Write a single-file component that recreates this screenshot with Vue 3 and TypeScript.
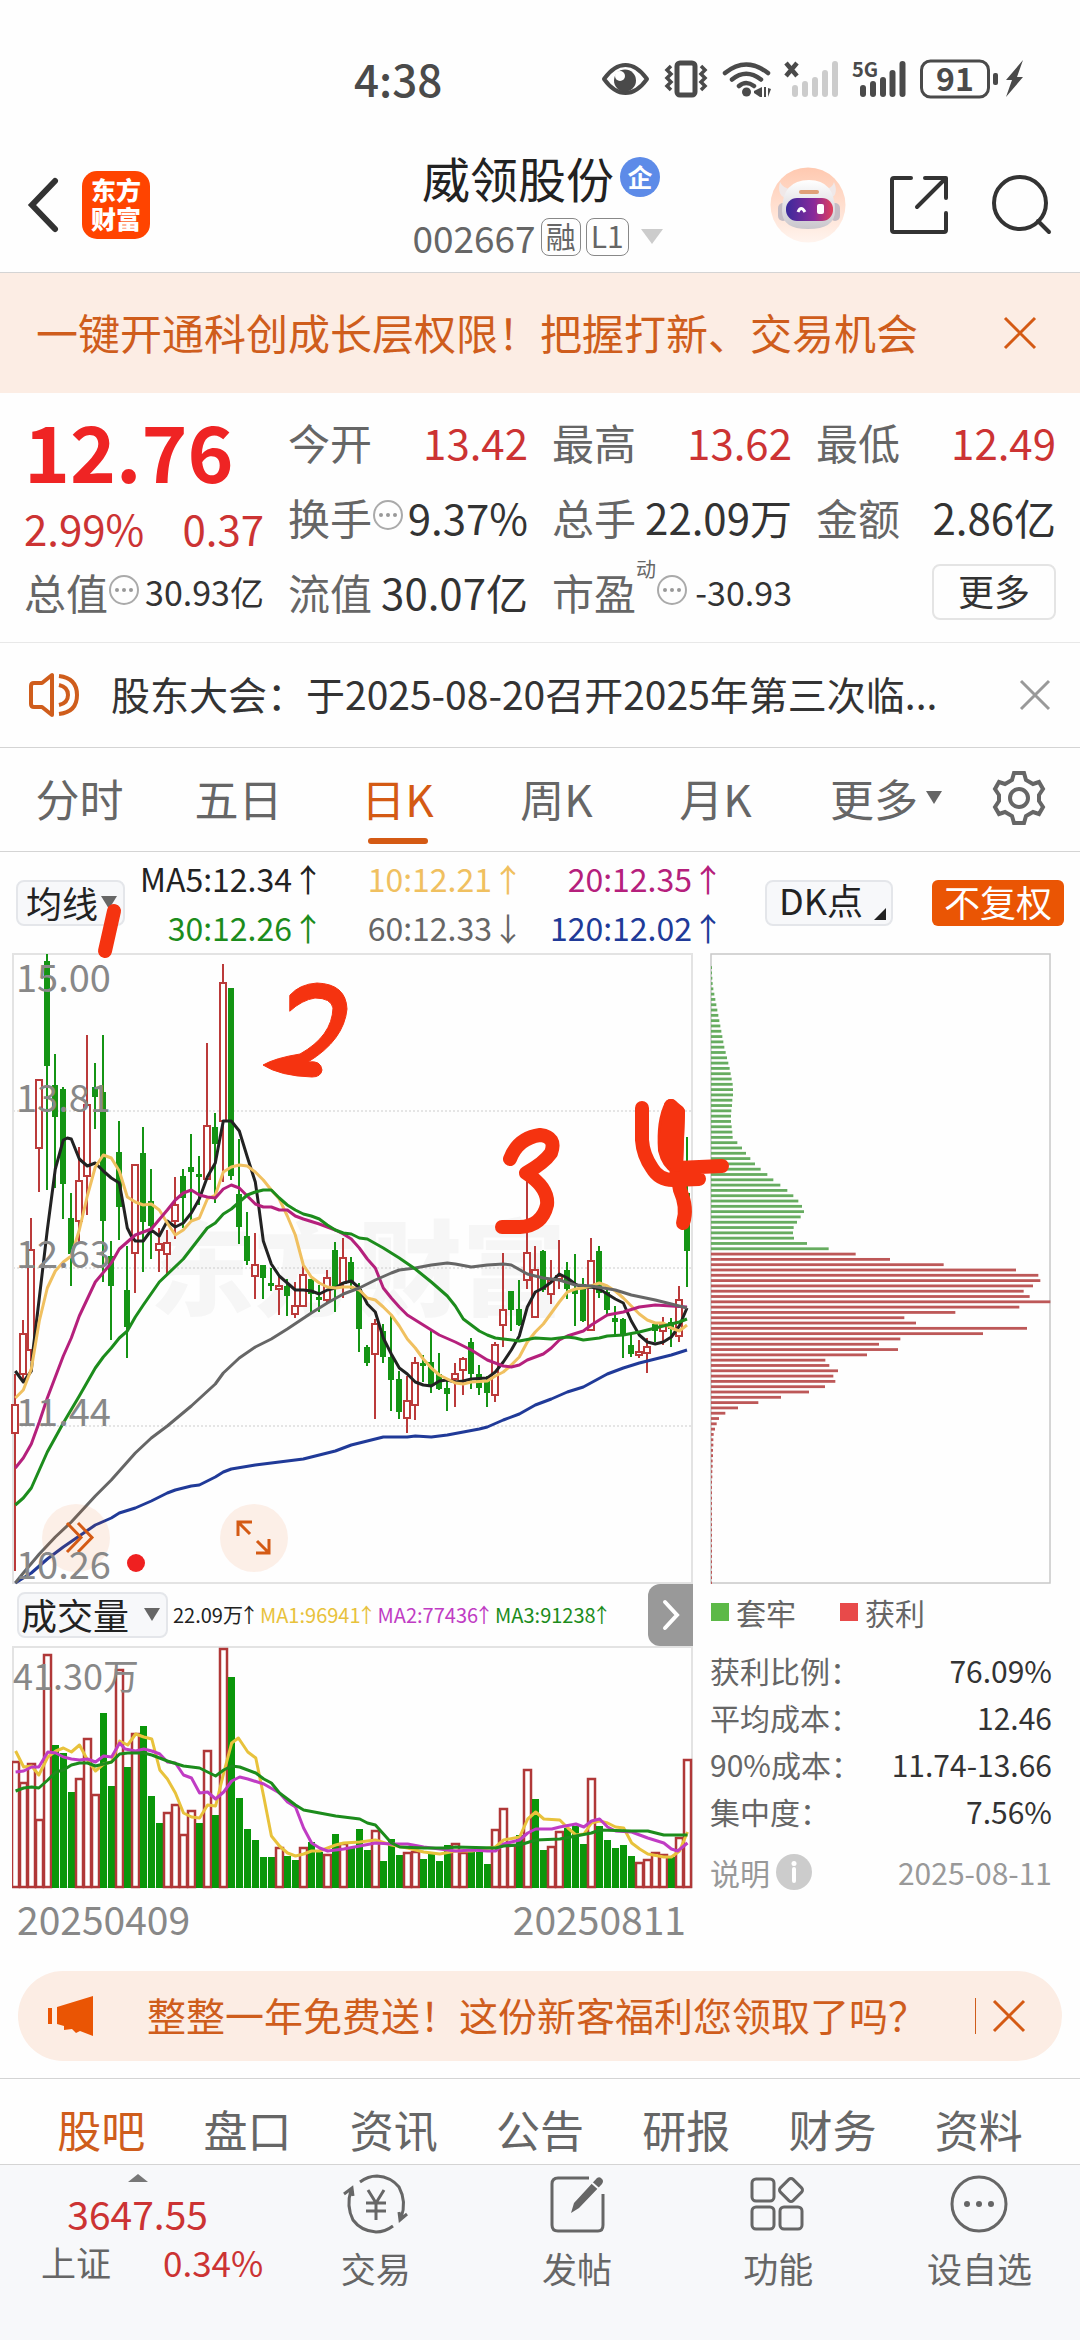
<script setup lang="ts">
import { ref } from 'vue'

type Candle = { x: number; up: boolean; high: number; top: number; bottom: number; low: number }

const STEP = 8
const FIRST_X = 15

const periods = ['分时', '五日', '日K', '周K', '月K']
const activePeriod = ref('日K')
const sections = ['股吧', '盘口', '资讯', '公告', '研报', '财务', '资料']
const activeSection = ref('股吧')

const averages = [
  { text: 'MA5:12.34', arrow: '↑', tone: 'ma5' },
  { text: '10:12.21', arrow: '↑', tone: 'ma10' },
  { text: '20:12.35', arrow: '↑', tone: 'ma20' },
  { text: '30:12.26', arrow: '↑', tone: 'ma30' },
  { text: '60:12.33', arrow: '↓', tone: 'ma60' },
  { text: '120:12.02', arrow: '↑', tone: 'ma120' },
]

const volumeAverages = [
  { text: '22.09万', tone: 'ma5' },
  { text: 'MA1:96941', tone: 'vol1' },
  { text: 'MA2:77436', tone: 'vol2' },
  { text: 'MA3:91238', tone: 'ma30' },
]

const costs = [
  { label: '获利比例：', value: '76.09%' },
  { label: '平均成本：', value: '12.46' },
  { label: '90%成本：', value: '11.74-13.66' },
  { label: '集中度：', value: '7.56%' },
]

const priceY = (v: number) => Math.round(940 + v / 2.376)
const volumeY = (v: number) => Math.round(1580 + v / 3)

// One entry per trading day: direction, high, body top, body bottom, low.
const candleData = `r 1030 1105 1172 1500;r 903 935 1032 1045;r 660 736 975 1000;r 330 332 494 598;g 33 50 300 594;
g 270 345 420 590;g 349 355 580 664;g 601 660 745 822;r 492 572 668 720;r 226 392 560 653;g 292 350 373 448;
g 226 362 667 812;g 715 750 823 950;g 431 504 635 713;g 728 832 920 994;r 534 534 743 838;g 444 507 670 790;
g 545 619 680 758;r 685 722 737 790;r 690 719 745 795;r 563 630 668 710;g 545 561 613 684;g 460 539 552 665;
g 513 556 562 630;r 245 443 567 567;g 412 444 484 625;r 56 102 429 575;g 115 115 560 570;g 473 603 682 723;
g 646 703 762 772;r 697 773 798 853;g 773 773 802 852;g 780 814 821 835;r 797 822 829 890;g 805 822 847 893;
r 813 869 888 898;r 765 796 869 872;g 806 806 840 887;g 820 848 852 885;r 783 803 855 862;g 717 737 830 885;
r 709 755 815 850;g 753 764 810 830;g 815 830 925 978;g 963 968 1005 1013;r 900 913 983 1137;g 912 930 990 1006;
g 890 990 1045 1120;g 1025 1043 1122 1137;r 1035 1096 1135 1172;r 990 1006 1106 1140;g 985 1005 1010 1050;
g 927 1003 1060 1077;g 981 1030 1068 1070;g 1040 1065 1078 1120;r 1004 1032 1042 1110;r 990 996 1022 1082;
g 946 956 1030 1066;g 1010 1030 1064 1080;g 1035 1046 1077 1110;r 954 962 1080 1098;r 744 878 914 966;
g 833 833 878 930;g 808 877 914 916;r 570 743 807 830;r 728 784 896 898;g 736 738 832 836;r 760 808 841 865;
r 712 798 804 830;g 766 785 830 852;g 746 830 842 916;g 804 818 906 908;r 709 762 927 929;g 728 738 838 850;
g 832 836 878 890;g 870 898 908 938;g 898 900 942 992;g 936 962 983 991;r 950 978 980 993;r 946 968 982 1028;
g 910 912 928 955;r 896 915 930 963;g 898 908 925 966;r 823 856 940 955;g 468 600 738 825`

const candles: Candle[] = candleData.split(';').map((row, i) => {
  const [dir, ...v] = row.trim().split(' ')
  const [high, top, bottom, low] = v.map((n) => priceY(Number(n)))
  return { x: FIRST_X + i * STEP, up: dir === 'r', high, top, bottom: Math.max(bottom, top + 3), low }
})

function points(data: string, x0: number, scale: number, toY: (v: number) => number): string {
  return data
    .trim()
    .split(/\s+/)
    .map((p) => {
      const [x, y] = p.split(',').map(Number)
      return `${Math.round((x0 + x / scale) * 10) / 10},${toY(y)}`
    })
    .join(' ')
}

const priceLine = (early: string, late: string) =>
  points(early, 0, 3, priceY) + ' ' + points(late, 340, 3, priceY)

const priceLines = [
  {
    tone: 'ma120',
    d: priceLine(
      '46,1528 94,1503 142,1470 190,1442 238,1416 286,1390 334,1373 358,1362 406,1350 454,1332 502,1315 526,1307 574,1298 598,1294 646,1277 670,1265 694,1258 766,1247 838,1240 910,1232 982,1220 1006,1213',
      '34,1199 82,1190 130,1181 202,1182 226,1179 274,1180 322,1175 370,1170 418,1163 442,1157 490,1141 538,1126 586,1106 634,1090 682,1075 730,1062 802,1032 850,1018 898,1006 946,996 994,986 1041,974',
    ),
  },
  {
    tone: 'ma5',
    d: priceLine(
      '46,1025 70,1050 94,1025 100,970 118,850 142,690 166,545 190,476 202,471 214,472 238,520 262,536 286,530 310,548 334,566 358,578 370,630 382,684 394,703 406,716 430,716 454,690 478,703 502,668 526,683 550,672 574,648 598,615 622,563 646,531 660,470 670,430 694,431 718,454 742,516 766,575 775,625 790,716 814,770 838,799 862,814 886,832 910,831 934,835 958,841 982,832 1006,826',
      '10,814 34,811 58,828 82,864 106,884 130,945 154,983 178,1016 202,1032 226,1050 250,1057 274,1060 298,1049 322,1046 346,1050 370,1047 394,1043 442,1040 466,1027 490,1003 514,973 538,940 562,873 586,837 610,828 634,813 658,793 682,804 706,818 730,826 754,825 778,829 802,840 826,853 850,863 874,906 898,938 922,956 946,960 970,956 994,944 1018,916 1041,874',
    ),
  },
  {
    tone: 'ma10',
    d: priceLine(
      '46,1088 70,1070 94,1020 118,905 142,828 166,786 190,764 214,750 238,690 262,608 286,540 310,511 334,519 358,548 382,610 406,623 430,630 454,627 478,642 502,673 526,700 550,690 574,667 598,660 622,615 646,605 670,552 694,540 718,535 742,538 766,551 790,570 814,593 838,615 862,655 886,702 910,772 934,800 958,816 982,824 1006,828',
      '10,825 34,824 58,832 82,850 106,856 130,872 154,892 178,916 202,947 226,970 250,995 274,1018 298,1033 322,1044 346,1053 370,1054 394,1050 442,1047 466,1037 490,1026 514,1010 538,990 562,955 586,932 610,912 634,886 658,860 682,837 706,829 730,826 754,822 778,814 802,822 826,834 850,850 874,870 898,888 922,904 946,910 970,911 994,922 1018,929 1041,915',
    ),
  },
  {
    tone: 'ma20',
    d: priceLine(
      '46,1255 70,1230 94,1197 118,1145 142,1088 190,988 214,945 238,893 286,813 334,768 358,735 382,718 406,702 454,687 502,642 526,617 550,601 574,594 598,606 622,611 646,613 670,592 694,583 718,590 742,608 766,627 790,635 814,634 838,641 862,641 886,656 910,662 958,675 1006,688',
      '10,698 34,710 58,731 82,757 106,780 130,826 154,850 178,872 202,890 250,914 298,938 346,956 394,975 442,997 466,1005 490,1011 514,1014 538,1010 562,999 610,983 634,969 658,951 682,940 730,929 754,914 778,902 802,890 850,883 898,873 946,868 994,870 1041,872',
    ),
  },
  {
    tone: 'ma60',
    d: priceLine(
      '46,1527 70,1505 118,1460 166,1418 214,1382 286,1320 334,1283 406,1218 454,1184 502,1155 574,1107 646,1055 670,1028 718,992 766,968 814,948 862,925 934,887 982,863',
      '10,840 58,826 106,808 154,792 178,785 226,780 274,773 322,768 346,770 394,777 442,772 490,770 514,773 562,793 610,802 658,807 706,820 754,822 826,832 874,843 946,855 994,866 1041,874',
    ),
  },
  {
    tone: 'ma30',
    d: priceLine(
      '46,1342 70,1326 94,1302 142,1216 190,1148 238,1083 262,1050 286,1016 310,990 334,970 358,945 382,928 406,895 430,867 478,812 550,757 622,685 646,672 670,650 694,638 718,622 742,607 766,598 790,593 814,595 838,613 862,630 886,642 910,652 934,656 958,664 982,676 1006,690',
      '10,697 34,698 58,707 82,711 130,732 178,756 226,782 274,812 322,847 346,870 370,900 394,914 418,928 442,939 466,945 490,948 538,952 586,946 634,947 682,944 706,946 730,950 778,945 802,940 850,939 898,932 946,922 994,912 1018,908 1041,900',
    ),
  },
]

const volumeData =
  'r542 r605 r549 r716 r222 g494 g519 g636 r594 r474 r641 g398 g618 r266 g560 r458 g438 g648 g729 r697 r671 r763 r690 g729 r510 g705 r203 g290 g653 g746 g779 g830 g832 r801 g828 g839 r801 g787 g815 r821 g761 r789 g805 g748 g810 r751 g843 g778 g825 r815 r813 g838 g820 g842 g795 r790 r815 g815 g815 g851 r746 r685 r792 g764 r568 g657 g810 r797 r754 g745 g737 g793 r594 g738 g780 g805 g796 g829 r845 r836 r815 r821 g830 r770 r536'

const volumes = volumeData.split(' ').map((v, i) => ({
  x: FIRST_X + i * STEP,
  up: v[0] === 'r',
  top: volumeY(Number(v.slice(1))),
}))

const volumeLine = (data: string) => points(data, 0, 2.24, volumeY)
const volumeLines = [
  {
    tone: 'vol1',
    d: volumeLine(
      '35,513 53,562 71,558 87,585 107,530 125,514 142,503 160,516 178,494 196,540 214,572 232,553 250,545 268,483 286,495 304,461 322,470 340,478 358,570 375,596 393,638 411,700 429,711 447,713 465,676 483,678 501,580 519,488 534,473 555,515 573,535 591,650 608,768 626,798 644,818 662,827 680,822 698,812 716,812 734,805 752,795 770,790 806,785 841,780 877,795 913,805 949,815 985,822 1021,812 1057,812 1110,802 1128,780 1164,770 1182,718 1200,695 1218,717 1254,719 1272,745 1290,764 1308,762 1325,730 1343,722 1361,730 1379,742 1397,745 1415,790 1433,808 1451,822 1487,830 1504,832 1522,812 1540,757',
    ),
  },
  {
    tone: 'vol2',
    d: volumeLine(
      '35,575 53,572 71,560 87,562 107,515 125,518 142,530 160,537 178,540 196,538 214,547 232,528 250,532 268,488 280,508 304,512 322,508 340,512 358,523 375,545 393,550 411,586 429,594 447,638 465,636 483,657 501,635 519,602 537,592 555,597 591,612 626,638 644,665 662,682 680,745 698,790 716,805 734,812 770,806 806,798 841,790 877,793 913,793 949,800 985,806 1021,814 1057,810 1092,814 1110,812 1128,792 1164,780 1182,760 1200,748 1236,748 1254,742 1290,732 1308,740 1325,722 1343,718 1361,740 1379,752 1415,755 1433,765 1451,775 1487,788 1504,808 1518,812 1540,790',
    ),
  },
  {
    tone: 'ma30',
    d: volumeLine(
      '35,634 53,625 71,622 87,624 107,600 125,576 142,570 160,555 178,550 196,550 214,558 232,552 250,545 268,523 286,518 322,518 340,524 375,542 411,558 447,565 465,577 483,587 501,570 519,558 537,560 573,578 591,598 608,610 626,638 662,675 680,690 716,698 752,708 806,718 823,730 841,735 859,762 877,790 895,800 949,804 1003,804 1021,801 1110,804 1128,798 1164,796 1200,780 1254,778 1290,768 1325,758 1343,750 1415,753 1451,753 1487,764 1522,766 1540,764',
    ),
  },
]

// Share of holders at each price level, from the top of the range down.
const trapped = [
  2, 2, 4, 5, 7, 10, 13, 16, 19, 22, 25, 28, 31, 34, 37, 40, 44, 48, 52, 56, 59, 62, 65, 66, 66, 64, 63, 61, 60, 60, 62,
  64, 65, 79, 93, 105, 118, 132, 149, 169, 187, 208, 229, 247, 262, 273, 279, 269, 258, 248, 246, 249, 288, 353,
]
const profitable = [
  434, 537, 698, 915, 982, 988, 966, 938, 956, 1018, 925, 733, 580, 615, 948, 816, 568, 504, 561, 468, 343, 355, 381,
  367, 373, 342, 294, 210, 142, 81, 43, 24, 17, 12, 8, 7, 7, 6, 6, 5, 5, 4, 4, 3, 3, 3, 3, 3, 3, 3, 3, 3, 3, 3, 3, 3, 3,
  3, 3, 3, 3, 3, 3,
]
const chips = [...trapped, ...profitable].map((w, i) => ({
  y: 967.4 + i * 5.305,
  w: Math.max(w / 3, 1),
  win: i >= trapped.length,
}))

const priceLabels = [
  { y: 992, text: '15.00' },
  { y: 1112, text: '13.81' },
  { y: 1268, text: '12.63' },
  { y: 1426, text: '11.44' },
  { y: 1579, text: '10.26' },
]
</script>

<template>
  <main class="app">
    <div class="status">
      <time class="clock">4:38</time>
      <svg class="status-icons" viewBox="600 55 426 50" aria-hidden="true">
        <g fill="none" stroke="#4a4a4a" stroke-width="4">
          <path d="M604 79 Q614 65 625.500 65 Q637 65 647 79 Q637 93 625.500 93 Q614 93 604 79Z" stroke-linejoin="round" />
          <rect x="677" y="63" width="18" height="32" rx="3" stroke-width="5" />
          <path d="M671 67 l-4 4 4 4 -4 4 4 4 -4 4 4 4M701 67 l4 4 -4 4 4 4 -4 4 4 4 -4 4" transform="translate(0 -1)" stroke-width="3.500" />
          <path d="M725 73 Q746 56 768 73M732 79.500 Q746 68 761 79.500M739 86 Q746 80 754 86" stroke-width="4.500" stroke-linecap="round" />
          <path d="M786 63 l11 13M797 63 l-11 13" stroke-width="4.500" />
          <rect x="921.500" y="61" width="67" height="36" rx="9" stroke-width="3" />
        </g>
        <g fill="#4a4a4a">
          <circle cx="625" cy="80.500" r="11" />
          <circle cx="620" cy="76" r="5" fill="#fff" />
          <circle cx="746.500" cy="92" r="4.500" />
          <path d="M762 87v10h-2l-6-4v-2zM764 87v10h2v-10zM768 88l3 1-3 8z" />
          <rect x="860" y="85" width="6" height="12" rx="3" />
          <rect x="870" y="81" width="6" height="16" rx="3" />
          <rect x="880" y="77" width="6" height="20" rx="3" />
          <rect x="889.500" y="70" width="6" height="27" rx="3" />
          <rect x="899.500" y="61" width="6" height="36" rx="3" />
          <rect x="993" y="73" width="5" height="12" rx="2" />
          <path d="M1023 60 1006 80h6l-6 17 17-20h-6z" />
        </g>
        <g fill="#ccc">
          <rect x="792" y="85" width="6" height="12" rx="3" />
          <rect x="802" y="81" width="6" height="16" rx="3" />
          <rect x="812" y="77" width="6" height="20" rx="3" />
          <rect x="822" y="70" width="6" height="27" rx="3" />
          <rect x="832" y="61" width="6" height="36" rx="3" />
        </g>
        <text class="net" x="852" y="77">5G</text>
        <text class="battery" x="955" y="91" text-anchor="middle">91</text>
      </svg>
    </div>

    <header class="head">
      <div class="head-left">
        <button class="icon-btn" aria-label="返回">
          <svg width="38" height="60" viewBox="0 0 38 60"><path d="M31 6 8 30 31 54" fill="none" stroke="#333" stroke-width="6" stroke-linecap="round" /></svg>
        </button>
        <span class="logo">东方<br />财富</span>
      </div>
      <div class="title">
        <h1>威领股份<span class="badge">企</span></h1>
        <p class="code">002667<span class="tag">融</span><span class="tag">L1</span>
          <svg class="code-arrow" width="24" height="16" viewBox="0 0 24 16"><path d="M1 0h22L12 15z" fill="#ccc" /></svg>
        </p>
      </div>
      <div class="head-right">
        <button class="icon-btn" aria-label="智能助手">
          <svg width="76" height="76" viewBox="0 0 76 76">
            <defs>
              <linearGradient id="halo" x1="0" y1="0" x2="0" y2="1"><stop offset="0" stop-color="#ffc9b0" /><stop offset="1" stop-color="#fff4ee" /></linearGradient>
              <linearGradient id="visor" x1="0" y1="0" x2="1" y2="0"><stop offset="0" stop-color="#3a2a9c" /><stop offset=".6" stop-color="#8a2a9a" /><stop offset="1" stop-color="#e0405a" /></linearGradient>
              <linearGradient id="shell" x1="0" y1="0" x2="0" y2="1"><stop offset="0" stop-color="#fff" /><stop offset="1" stop-color="#c9c6cc" /></linearGradient>
            </defs>
            <circle cx="38" cy="38" r="37.500" fill="url(#halo)" />
            <path d="M10 15 Q6 30 19 32 L24 22 Q14 23 10 15ZM64 15 Q70 30 57 32 L52 22 Q62 23 64 15Z" fill="#f0e8e8" />
            <rect x="8" y="36" width="10" height="18" rx="5" fill="#c4bcc4" /><rect x="60" y="36" width="10" height="18" rx="5" fill="#c4bcc4" />
            <path d="M12 44 Q12 13 39 13 Q65 13 65 44 Q65 62 38 62 Q12 62 12 44Z" fill="url(#shell)" />
            <rect x="29" y="23" width="20" height="4" rx="2" fill="#e0a078" />
            <rect x="16" y="31" width="47" height="23" rx="11" fill="url(#visor)" />
            <path d="M28 45 Q31 38 35 45" fill="none" stroke="#fff" stroke-width="3" />
            <rect x="47" y="37" width="7" height="10" rx="2" fill="#fff" />
          </svg>
        </button>
        <button class="icon-btn" aria-label="分享">
          <svg width="60" height="60" viewBox="0 0 60 60" fill="none" stroke="#333" stroke-width="4" stroke-linecap="round" stroke-linejoin="round">
            <path d="M22 3H5Q3 3 3 5V55Q3 57 5 57H55Q57 57 57 55V38M36 3H57V23M56 4 28 32" />
          </svg>
        </button>
        <button class="icon-btn" aria-label="搜索">
          <svg width="60" height="60" viewBox="0 0 60 60" fill="none" stroke="#333" stroke-width="4" stroke-linecap="round">
            <circle cx="28" cy="28" r="26" /><path d="M46 46 57 57" />
          </svg>
        </button>
      </div>
    </header>

    <aside class="banner">
      <a href="#" class="banner-link">一键开通科创成长层权限！把握打新、交易机会</a>
      <button class="icon-btn" aria-label="关闭">
        <svg width="34" height="34" viewBox="0 0 34 34"><path d="M2 2 32 32M32 2 2 32" stroke="#d45a14" stroke-width="3" /></svg>
      </button>
    </aside>

    <section class="quote">
      <div class="price-cell">
        <strong class="price">12.76</strong>
        <div class="change"><span>2.99%</span><span>0.37</span></div>
      </div>
      <div class="cell"><span class="label">今开</span><span class="red">13.42</span></div>
      <div class="cell"><span class="label">最高</span><span class="red">13.62</span></div>
      <div class="cell"><span class="label">最低</span><span class="red">12.49</span></div>
      <div class="cell">
        <span class="label">换手<svg class="more-dot" viewBox="0 0 32 32"><use href="#dots" /></svg></span><span>9.37%</span>
      </div>
      <div class="cell"><span class="label">总手</span><span>22.09万</span></div>
      <div class="cell"><span class="label">金额</span><span>2.86亿</span></div>
      <div class="cell">
        <span class="label">总值<svg class="more-dot" viewBox="0 0 32 32"><use href="#dots" /></svg></span><span class="small">30.93亿</span>
      </div>
      <div class="cell"><span class="label">流值</span><span>30.07亿</span></div>
      <div class="cell">
        <span class="label">市盈<sup>动</sup><svg class="more-dot" viewBox="0 0 32 32"><g id="dots"><circle cx="16" cy="16" r="14" fill="none" stroke="#aaa" stroke-width="2" /><g fill="#999"><circle cx="9" cy="16" r="2" /><circle cx="16" cy="16" r="2" /><circle cx="23" cy="16" r="2" /></g></g></svg></span><span class="small">-30.93</span>
      </div>
      <div class="cell end"><button class="more-btn">更多</button></div>
    </section>

    <section class="notice">
      <svg width="52" height="46" viewBox="0 0 52 46" fill="none" stroke="#cf5d1c" stroke-width="4" stroke-linejoin="round">
        <path d="M24 3V43L14 35H6Q3 35 3 32V14Q3 11 6 11H14ZM31 13Q40 15 40 23Q40 31 31 33M31 4Q49 6 49 23Q49 40 31 42" />
      </svg>
      <a href="#" class="notice-text">股东大会：于2025-08-20召开2025年第三次临...</a>
      <button class="icon-btn" aria-label="关闭公告">
        <svg width="32" height="32" viewBox="0 0 32 32"><path d="M2 2 30 30M30 2 2 30" stroke="#999" stroke-width="3" /></svg>
      </button>
    </section>

    <nav class="periods">
      <button v-for="p in periods" :key="p" :class="{ active: p === activePeriod }" @click="activePeriod = p">
        <span>{{ p }}</span>
      </button>
      <button>更多<svg class="tab-arrow" width="16" height="14" viewBox="0 0 16 14"><path d="M0 0h16L8 13z" fill="#666" /></svg></button>
      <button aria-label="设置">
        <svg width="54" height="56" viewBox="0 0 54 56" fill="none" stroke="#666" stroke-width="4">
          <path d="M22 3H32L34 10 41 14 47 12 51 19 47 25V31L51 37 47 44 41 42 34 46 32 53H22L20 46 13 42 7 44 3 37 7 31V25L3 19 7 12 13 14 20 10Z" />
          <circle cx="27" cy="28" r="9" />
        </svg>
      </button>
    </nav>

    <section class="indicators">
      <label class="picker ma-picker">
        <select aria-label="主图指标"><option>均线</option></select>
        <svg width="16" height="14" viewBox="0 0 16 14"><path d="M0 0h16L8 13z" fill="#666" /></svg>
      </label>
      <div class="averages">
        <span v-for="a in averages" :key="a.text" :class="a.tone">{{ a.text }}<i>{{ a.arrow }}</i></span>
      </div>
      <button class="dk">DK点<svg width="12" height="12" viewBox="0 0 12 12"><path d="M12 0V12H0z" fill="#222" /></svg></button>
      <button class="adjust">不复权</button>
    </section>

    <section class="charts">
      <div class="left">
        <svg class="kline" viewBox="12 953 681 631">
          <text class="watermark" x="150" y="1308">东方财富</text>
          <path d="M13 1111H692M13 1268H692M13 1426H692" stroke="#ccc" stroke-dasharray="2 2" />
          <rect x="13" y="954" width="679" height="629" fill="none" stroke="#e3e3e3" stroke-width="2" />
          <g v-for="c in candles" :key="c.x">
            <template v-if="c.up">
              <path :d="`M${c.x} ${c.high}V${c.top}M${c.x} ${c.bottom}V${c.low}`" stroke="#bb3a3a" stroke-width="2" />
              <rect :x="c.x - 3" :y="c.top" width="6" :height="c.bottom - c.top" fill="#fff" stroke="#bb3a3a" stroke-width="2" />
            </template>
            <template v-else>
              <path :d="`M${c.x} ${c.high}V${c.low}`" stroke="#149414" stroke-width="2" />
              <rect :x="c.x - 3" :y="c.top" width="6" :height="c.bottom - c.top" fill="#149414" />
            </template>
          </g>
          <polyline v-for="l in priceLines" :key="l.tone" :class="['line', l.tone]" :points="l.d" />
          <g fill="#ea5504" fill-opacity=".09"><circle cx="76" cy="1538" r="34" /><circle cx="254" cy="1538" r="34" /></g>
          <path d="M67 1523 81 1537.500 67 1552M78 1523 92 1537.500 78 1552M238 1536V1522H252M239 1523 250 1534M256 1553H269V1539M268 1552 257 1541" fill="none" stroke="#d45a14" stroke-width="3" />
          <text v-for="p in priceLabels" :key="p.text" class="axis" x="16" :y="p.y">{{ p.text }}</text>
          <circle cx="136" cy="1563" r="9" fill="#ef2020" />
          <g class="ink">
            <path d="M114 911 105 951" />
            <path d="M510 1159Q518 1138 540 1135Q557 1137 551 1153Q544 1163 526 1173Q549 1188 547 1205Q542 1226 520 1227H502" />
            <path d="M642 1108V1140Q643 1155 652 1168Q659 1180 673 1180L699 1179M671 1106Q663 1122 665 1150Q668 1163 677 1168L722 1166M678 1112 676 1168 680 1190Q688 1208 683 1223" />
            <path d="M671 1106 678 1112 676 1165 665 1148Z" class="solid" />
            <path class="solid thin" d="M290 995Q300 984 317 983Q346 984 347 1009Q344 1040 308 1062Q321 1060 322 1070Q321 1077 312 1077Q280 1076 263 1065Q275 1058 300 1054Q332 1036 333 1008Q331 998 315 998Q302 1000 290 1011Z" />
          </g>
        </svg>

        <div class="volume-head">
          <label class="picker volume-picker">
            <select aria-label="副图指标"><option>成交量</option></select>
            <svg width="16" height="14" viewBox="0 0 16 14"><path d="M0 0h16L8 13z" fill="#666" /></svg>
          </label>
          <p class="volume-averages">
            <span v-for="v in volumeAverages" :key="v.text" :class="v.tone">{{ v.text }}<i>↑</i></span>
          </p>
          <button class="pager" aria-label="收起">
            <svg width="20" height="32" viewBox="0 0 20 32"><path d="M4 3 16 16 4 29" fill="none" stroke="#fff" stroke-width="4" stroke-linecap="round" /></svg>
          </button>
        </div>

        <svg class="volume" viewBox="12 1646 681 243">
          <rect x="13" y="1647" width="679" height="240" fill="none" stroke="#e3e3e3" stroke-width="2" />
          <template v-for="v in volumes" :key="v.x">
            <rect v-if="v.up" :x="v.x - 3" :y="v.top + 1" width="7" :height="1886 - v.top" fill="#fff" stroke="#b03838" stroke-width="2.500" />
            <rect v-else :x="v.x - 3" :y="v.top" width="7" :height="1888 - v.top" fill="#0a960a" />
          </template>
          <polyline v-for="l in volumeLines" :key="l.tone" :class="['line', l.tone]" :points="l.d" />
          <text class="axis volume-axis" x="13" y="1690">41.30万</text>
        </svg>
        <div class="dates"><time>20250409</time><time>20250811</time></div>
      </div>

      <div class="right">
        <svg class="chips" viewBox="710 953 342 631">
          <rect x="711" y="954" width="339" height="629" fill="none" stroke="#c8c8c8" stroke-width="1.500" />
          <rect v-for="c in chips" :key="c.y" x="711" :y="c.y - 1.200" :width="c.w" height="2.800" :fill="c.win ? '#bd5858' : '#67ac60'" />
        </svg>
        <div class="legend">
          <span><b class="green-box"></b>套牢</span>
          <span><b class="red-box"></b>获利</span>
        </div>
        <table class="costs">
          <tbody>
            <tr v-for="c in costs" :key="c.label"><th scope="row">{{ c.label }}</th><td>{{ c.value }}</td></tr>
          </tbody>
        </table>
        <div class="explain">
          <a href="#">说明<svg width="36" height="36" viewBox="0 0 36 36"><circle cx="18" cy="18" r="18" fill="#ccc" /><path d="M18 15V27" stroke="#fff" stroke-width="4" stroke-linecap="round" /><circle cx="18" cy="9.500" r="2.500" fill="#fff" /></svg></a>
          <time>2025-08-11</time>
        </div>
      </div>
    </section>

    <aside class="promo">
      <svg width="46" height="42" viewBox="0 0 46 42" fill="#ea5504"><path d="M0 13h4v16H0zM9 12 45 1V41L32 36 28 38 24 34 16 35V31L9 29Z" /></svg>
      <a href="#" class="promo-link">整整一年免费送！这份新客福利您领取了吗？</a>
      <span class="rule"></span>
      <button class="icon-btn" aria-label="关闭活动">
        <svg width="34" height="34" viewBox="0 0 34 34"><path d="M2 2 32 32M32 2 2 32" stroke="#d45a14" stroke-width="3" /></svg>
      </button>
    </aside>

    <nav class="sections">
      <button v-for="s in sections" :key="s" :class="{ active: s === activeSection }" @click="activeSection = s">{{ s }}</button>
    </nav>

    <footer class="toolbar">
      <button class="index">
        <svg width="20" height="8" viewBox="0 0 20 8"><path d="M0 8h20L10 0z" fill="#777" /></svg>
        <span class="index-value">3647.55</span>
        <span class="index-row"><span>上证</span><span class="red">0.34%</span></span>
      </button>
      <button class="tool">
        <svg width="66" height="60" viewBox="0 0 66 60" fill="none" stroke="#666" stroke-width="3">
          <path d="M17 8Q25 2 34 2Q48 3 56 13Q64 28 58 44M64 40 57 46 56 38M50 52Q42 58 33 58Q18 57 10 46Q3 32 8 16M1 20 9 14 10 22" />
          <path d="M25 16 33 29 41 16M23 29H43M23 37H43M33 29V46" />
        </svg>交易
      </button>
      <button class="tool">
        <svg width="60" height="60" viewBox="0 0 60 60" fill="none" stroke="#666" stroke-width="3">
          <path d="M42 4H11Q5 4 5 10V51Q5 57 11 57H51Q56 57 56 51V20" />
          <path d="M24 39 27 29 50 4Q53 2 55 5Q57 7 55 10L32 34Z" fill="#666" stroke="none" /><path d="M44 8 52 15" stroke="#f7f8fa" stroke-width="2" />
        </svg>发帖
      </button>
      <button class="tool">
        <svg width="60" height="60" viewBox="0 0 60 60" fill="none" stroke="#666" stroke-width="3">
          <rect x="4" y="5" width="22" height="22" rx="4" /><rect x="4" y="33" width="22" height="22" rx="4" /><rect x="32" y="33" width="22" height="22" rx="4" />
          <rect x="34" y="7" width="18" height="18" rx="3" transform="rotate(45 43 16)" />
        </svg>功能
      </button>
      <button class="tool">
        <svg width="60" height="60" viewBox="0 0 60 60"><circle cx="30" cy="30" r="27" fill="none" stroke="#666" stroke-width="3" /><g fill="#666"><circle cx="18" cy="30" r="3" /><circle cx="30" cy="30" r="3" /><circle cx="42" cy="30" r="3" /></g></svg>设自选
      </button>
    </footer>
  </main>
</template>

<style>
body {
  background: #fefefe;
}
</style>

<style scoped>
.app {
  font-family: 'Noto Sans CJK SC', 'Noto Sans', sans-serif;
  font-size: 42px;
  color: #333;
  line-height: 1;
}
button,
select {
  font: inherit;
  color: inherit;
  border: 0;
  background: none;
  padding: 0;
  margin: 0;
}
a {
  color: inherit;
  text-decoration: none;
}
svg {
  display: block;
}
h1,
p {
  margin: 0;
  font-weight: 400;
}
i {
  display: inline-flex;
  justify-content: center;
  font-style: normal;
}
.icon-btn {
  display: flex;
  flex: none;
}
.red {
  color: #cc3333;
}

.status {
  display: flex;
  align-items: center;
  justify-content: space-between;
  height: 138px;
  box-sizing: border-box;
  padding: 22px 54px 0 354px;
}
.clock {
  padding-bottom: 4px;
  font-size: 44px;
  font-weight: 500;
  line-height: 50px;
  color: #4a4a4a;
}
.status-icons {
  width: 426px;
}
.net {
  font-size: 20px;
  font-weight: 700;
  fill: #4a4a4a;
}
.battery {
  font-size: 32px;
  font-weight: 700;
  fill: #4a4a4a;
}

.head {
  display: grid;
  grid-template-columns: 1fr auto 1fr;
  align-items: center;
  height: 134px;
  padding: 0 28px 0 24px;
  border-bottom: 1px solid #d4d4d4;
}
.head-left {
  display: flex;
  align-items: center;
  gap: 20px;
}
.logo {
  width: 68px;
  height: 68px;
  box-sizing: border-box;
  padding-top: 4px;
  border-radius: 15px;
  background: #ff4400;
  color: #fff;
  font-size: 25px;
  font-weight: 900;
  line-height: 29px;
  text-align: center;
}
.title {
  padding-top: 4px;
}
.title h1 {
  display: flex;
  align-items: center;
  justify-content: center;
  gap: 6px;
  padding-left: 6px;
  font-size: 48px;
  line-height: 60px;
  color: #222;
}
.badge {
  width: 40px;
  height: 40px;
  border-radius: 50%;
  background: #5d8be8;
  color: #fff;
  font-size: 25px;
  font-weight: 700;
  line-height: 38px;
  text-align: center;
}
.code {
  display: flex;
  align-items: center;
  gap: 5px;
  font-size: 37px;
  line-height: 60px;
  color: #666;
}
.tag {
  height: 38px;
  min-width: 38px;
  padding: 0 4px;
  box-sizing: border-box;
  border: 1px solid #888;
  border-radius: 8px;
  font-size: 30px;
  line-height: 33px;
  text-align: center;
}
.code-arrow {
  margin-left: 6px;
}
.head-right {
  display: flex;
  align-items: center;
  justify-content: flex-end;
  gap: 43px;
}

.banner {
  display: flex;
  align-items: center;
  justify-content: space-between;
  height: 120px;
  padding: 0 43px 0 36px;
  background: #fcede4;
  color: #cf5d1c;
}
.banner-link {
  padding-bottom: 3px;
  line-height: 60px;
}

.quote {
  display: grid;
  grid-template-columns: repeat(4, 1fr);
  grid-auto-rows: 75px;
  column-gap: 24px;
  padding: 11px 24px 13px;
  border-bottom: 1px solid #e8e8e8;
}
.price-cell {
  grid-row: span 2;
  color: #cc3333;
}
.price {
  display: block;
  font-size: 78px;
  line-height: 90px;
  font-weight: 700;
  color: #ef2424;
}
.change {
  display: flex;
  justify-content: space-between;
  line-height: 68px;
}
.cell {
  display: flex;
  align-items: center;
  justify-content: space-between;
  white-space: nowrap;
}
.cell.end {
  justify-content: flex-end;
}
.label {
  display: flex;
  align-items: center;
  color: #666;
}
.label sup {
  align-self: flex-start;
  margin-top: -12px;
  font-size: 20px;
  line-height: 20px;
}
.more-dot {
  width: 32px;
  height: 32px;
  margin-bottom: 4px;
}
.small {
  font-size: 34px;
}
.more-btn {
  width: 124px;
  height: 56px;
  padding-bottom: 4px;
  border: 2px solid #e4e4e4;
  border-radius: 8px;
  font-size: 36px;
  line-height: 48px;
}

.notice {
  display: flex;
  align-items: center;
  height: 104px;
  padding: 0 29px 0 28px;
  border-bottom: 1px solid #d4d4d4;
}
.notice-text {
  flex: 1;
  padding: 0 0 5px 31px;
  font-size: 39px;
  line-height: 60px;
  white-space: nowrap;
}

.periods {
  display: grid;
  grid-template-columns: repeat(5, 159fr) 182fr 83fr;
  height: 103px;
  padding-right: 20px;
  border-bottom: 1px solid #d4d4d4;
  font-size: 44px;
  color: #666;
}
.periods button {
  position: relative;
  display: flex;
  align-items: center;
  justify-content: center;
  padding-bottom: 3px;
}
.periods .active {
  color: #d45a14;
}
.periods .active::after {
  content: '';
  position: absolute;
  bottom: 7px;
  width: 60px;
  height: 6px;
  border-radius: 3px;
  background: #d45a14;
}
.tab-arrow {
  margin-left: 8px;
}

.indicators {
  display: flex;
  align-items: center;
  height: 101px;
  padding: 0 16px;
  font-size: 36px;
}
.picker {
  position: relative;
  flex: none;
  display: flex;
  align-items: center;
}
.picker select {
  appearance: none;
  width: 100%;
  height: 46px;
  padding: 0 8px 2px;
  box-sizing: border-box;
  border: 2px solid #e4e6ea;
  border-radius: 8px;
  background: #f7f8fa;
  color: #222;
  font-size: 36px;
  line-height: 40px;
}
.picker svg {
  position: absolute;
  right: 8px;
  pointer-events: none;
}
.ma-picker {
  width: 109px;
}
.averages {
  display: grid;
  grid-template-columns: 192px 200px 200px;
  font-size: 32px;
  line-height: 49px;
  text-align: right;
  white-space: nowrap;
}
.averages i {
  width: 18px;
  margin-left: 7px;
}
.dk {
  display: flex;
  align-items: flex-end;
  justify-content: space-between;
  width: 128px;
  height: 46px;
  margin-left: auto;
  padding: 0 5px 4px 12px;
  box-sizing: border-box;
  border: 2px solid #e4e6ea;
  border-radius: 8px;
  background: #f7f8fa;
  color: #222;
  line-height: 42px;
}
.adjust {
  width: 132px;
  height: 46px;
  margin-left: 39px;
  padding-bottom: 4px;
  border-radius: 6px;
  background: #ea5504;
  color: #fff;
  line-height: 42px;
}
.ma5 { color: #222; }
.ma10 { color: #f0c060; }
.ma20 { color: #b5207c; }
.ma30 { color: #1c8c1c; }
.ma60 { color: #666; }
.ma120 { color: #203a98; }
.vol1 { color: #e8c23c; }
.vol2 { color: #c03cc4; }

.charts {
  display: grid;
  grid-template-columns: 681fr 342fr;
  column-gap: 17px;
  padding: 0 28px 0 12px;
}
.kline {
  position: relative;
  z-index: 1;
  width: 100%;
  overflow: visible;
}
.line {
  fill: none;
  stroke: currentColor;
  stroke-width: 3;
  stroke-linejoin: round;
}
.watermark {
  font-size: 104px;
  font-weight: 900;
  fill: #f6f6f6;
}
.axis {
  font-size: 38px;
  fill: #888;
}
.volume-axis {
  font-size: 36px;
}
.ink {
  fill: none;
  stroke: #f53310;
  stroke-width: 14;
  stroke-linecap: round;
  stroke-linejoin: round;
}
.ink .solid {
  fill: #f53310;
}
.ink .thin {
  stroke-width: 1;
}
.volume-head {
  display: flex;
  align-items: center;
  height: 62px;
  padding-left: 5px;
}
.volume-picker {
  width: 151px;
}
.volume-picker select {
  padding-left: 2px;
}
.volume-averages {
  display: flex;
  flex: 1;
  gap: 5px;
  padding-left: 5px;
  font-size: 20px;
  white-space: nowrap;
}
.volume-averages i {
  width: 12px;
}
.pager {
  display: flex;
  align-items: center;
  justify-content: center;
  width: 45px;
  height: 62px;
  border-radius: 12px 0 0 12px;
  background: #999;
}
.volume {
  width: 100%;
}
.dates {
  display: flex;
  justify-content: space-between;
  padding: 0 7px 0 5px;
  font-size: 39px;
  line-height: 58px;
  color: #888;
}

.chips {
  width: 100%;
}
.right {
  font-size: 30px;
  color: #666;
}
.legend {
  display: flex;
  gap: 44px;
  padding-left: 1px;
  line-height: 54px;
  height: 56px;
}
.legend span {
  display: flex;
  align-items: center;
  gap: 7px;
}
.legend b {
  width: 18px;
  height: 18px;
}
.green-box { background: #5cb947; }
.red-box { background: #e84a4a; }
.costs {
  width: 100%;
  margin-top: 6px;
  border-collapse: collapse;
}
.costs th,
.costs td {
  height: 47px;
  padding: 0;
  font-weight: 400;
  text-align: left;
  white-space: nowrap;
}
.costs td {
  color: #333;
  text-align: right;
}
.explain {
  display: flex;
  justify-content: space-between;
  align-items: center;
  margin-top: 18px;
  line-height: 40px;
  color: #999;
}
.explain a {
  display: flex;
  align-items: center;
  gap: 6px;
}

.promo {
  display: flex;
  align-items: center;
  height: 90px;
  margin: 24px 18px 17px;
  padding: 0 36px 0 30px;
  border-radius: 45px;
  background: #fcede4;
  color: #cf5d1c;
}
.promo-link {
  flex: 1;
  padding: 0 0 5px 53px;
  font-size: 39px;
  line-height: 60px;
}
.rule {
  width: 1px;
  height: 36px;
  margin-right: 16px;
  background: #cf5d1c;
}

.sections {
  display: grid;
  grid-template-columns: repeat(7, 1fr);
  padding: 0 28px;
  border-top: 1px solid #d4d4d4;
  border-bottom: 1px solid #d4d4d4;
  font-size: 44px;
  line-height: 65px;
  color: #666;
}
.sections button {
  padding: 18px 0 2px;
}
.sections .active {
  color: #cf5d1c;
}

.toolbar {
  display: grid;
  grid-template-columns: 275fr repeat(4, 201fr);
  height: 175px;
  background: #f7f8fa;
  color: #666;
  font-size: 35px;
}
.toolbar button {
  display: flex;
  flex-direction: column;
  align-items: center;
}
.index {
  padding-top: 9px;
}
.index-value {
  margin-top: 7px;
  color: #cc3333;
  font-size: 39px;
  line-height: 48px;
}
.index-row {
  display: flex;
  gap: 52px;
  align-self: stretch;
  padding-left: 41px;
  line-height: 50px;
}
.tool {
  padding-top: 9px;
  line-height: 68px;
}
</style>
